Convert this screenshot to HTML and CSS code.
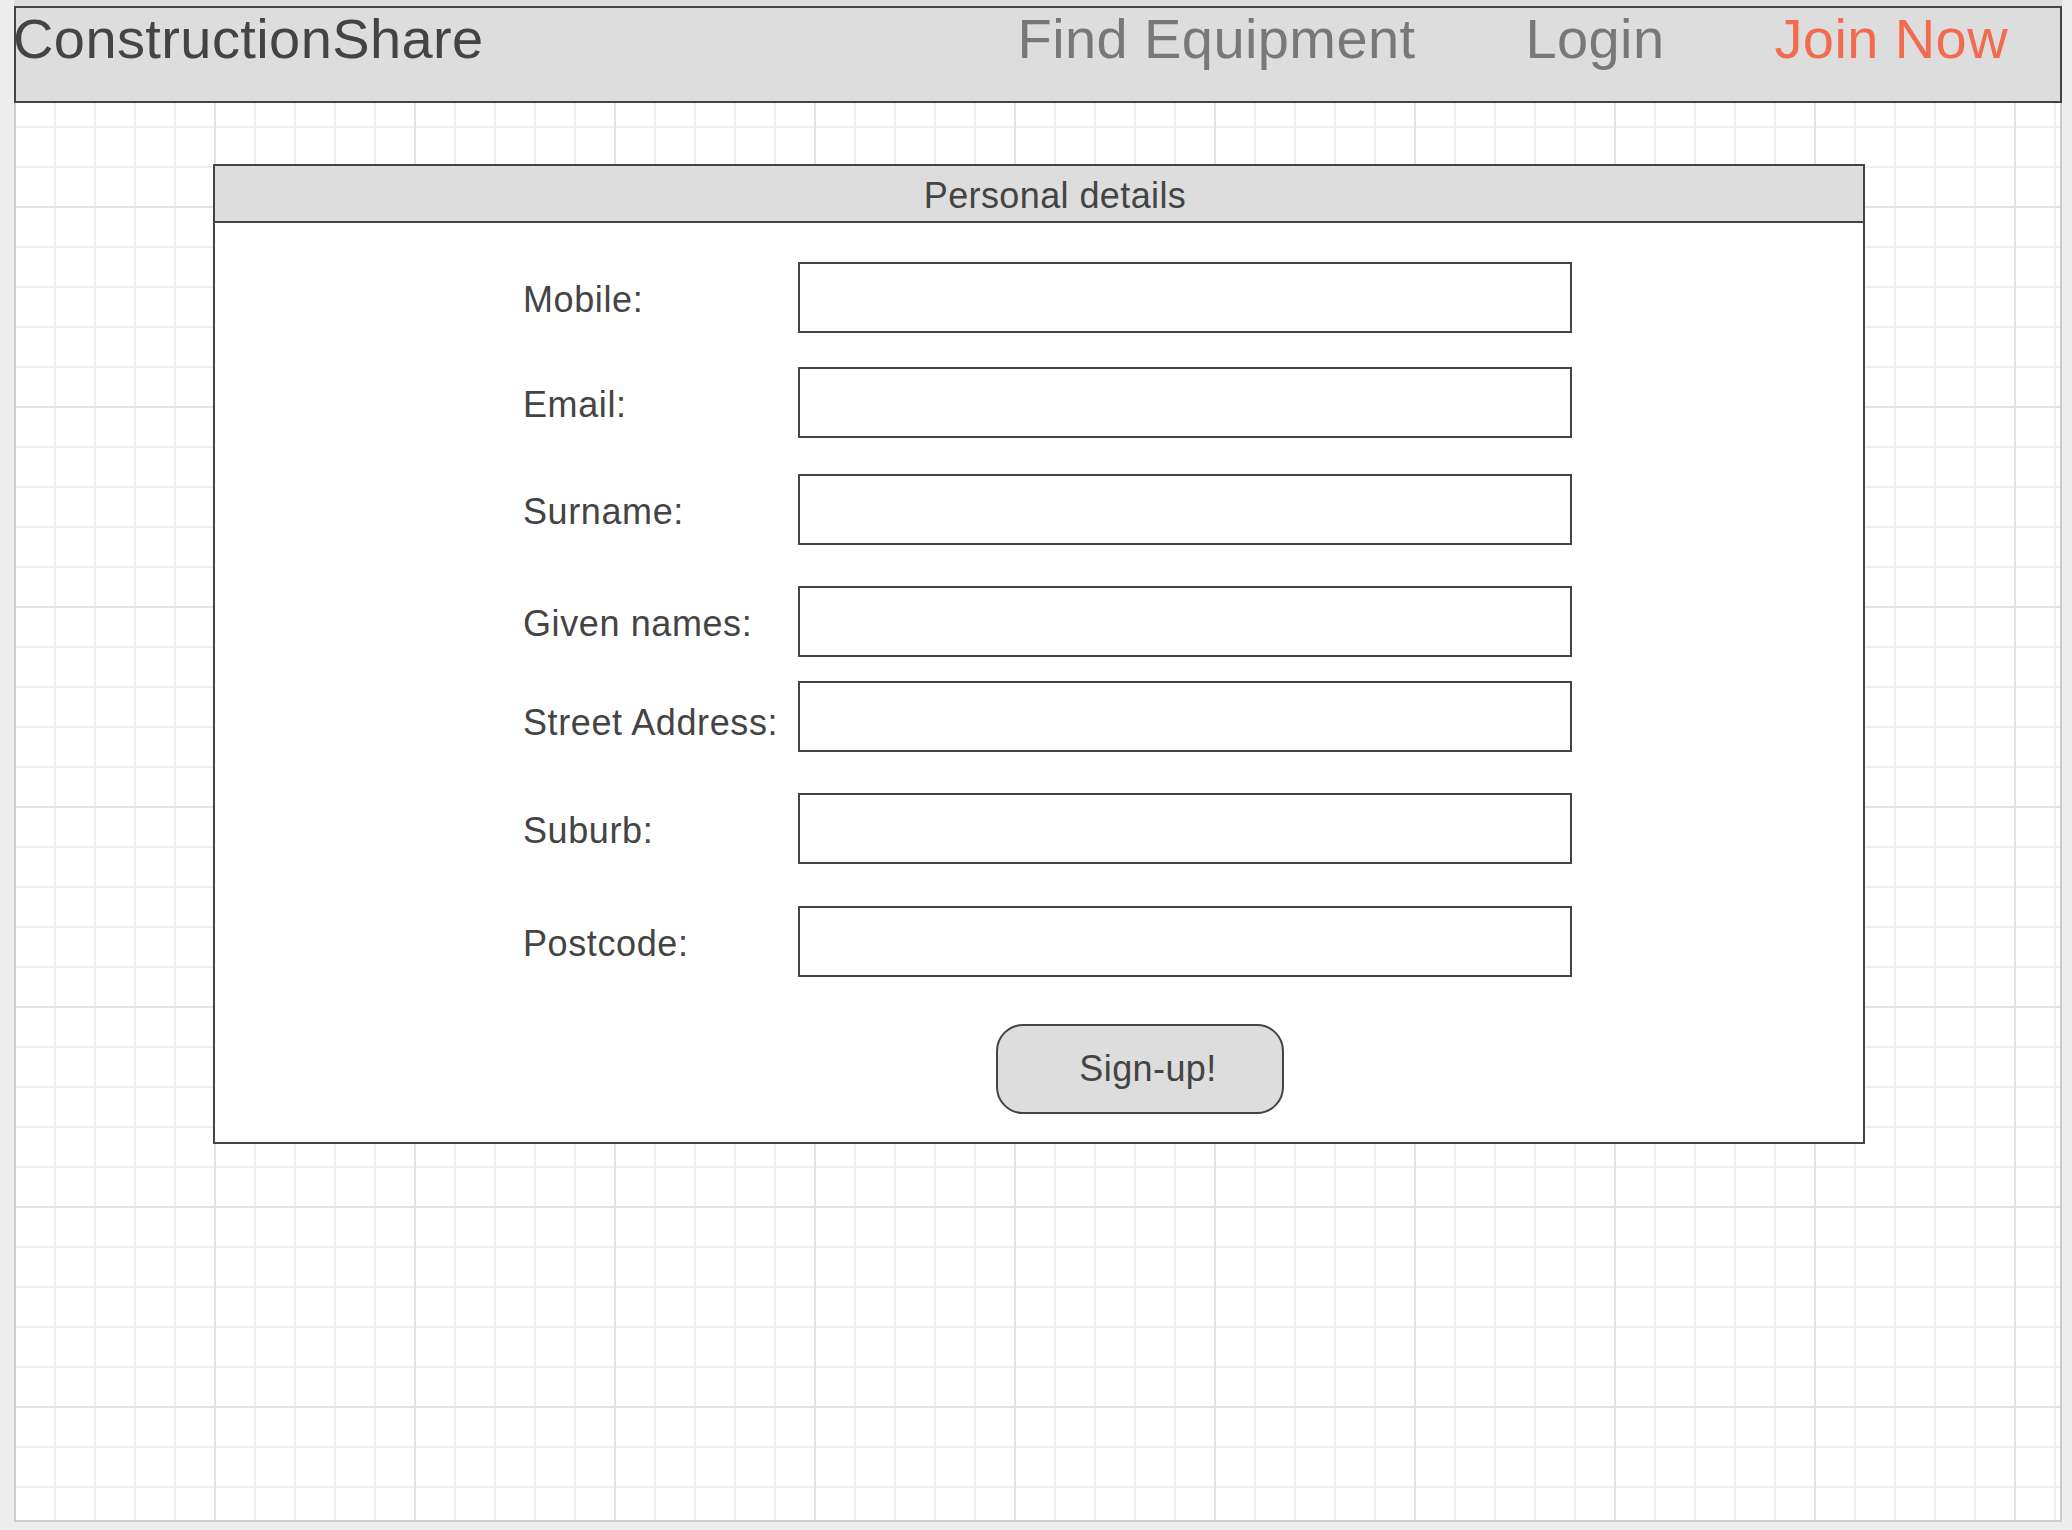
FILE: index.html
```html
<!DOCTYPE html>
<html lang="en">
<head>
<meta charset="utf-8">
<title>ConstructionShare – Join Now</title>
<link rel="stylesheet" href="styles.css">
</head>
<body>
<div class="app">
  <div class="topstrip"></div>
  <header class="header">
    <div class="brand">ConstructionShare</div>
    <nav class="nav">
      <a class="nav-link">Find Equipment</a>
      <a class="nav-link">Login</a>
      <a class="nav-link nav-link--active">Join Now</a>
    </nav>
  </header>
  <main class="canvas">
    <section class="panel">
      <div class="panel-title">Personal details</div>
      <form class="panel-body">
        <div class="row">
          <label class="label">Mobile:</label>
          <input class="field" type="text">
        </div>
        <div class="row row--email">
          <label class="label">Email:</label>
          <input class="field" type="text">
        </div>
        <div class="row row--surname">
          <label class="label">Surname:</label>
          <input class="field" type="text">
        </div>
        <div class="row row--given">
          <label class="label">Given names:</label>
          <input class="field" type="text">
        </div>
        <div class="row row--street">
          <label class="label label--low">Street Address:</label>
          <input class="field" type="text">
        </div>
        <div class="row row--suburb">
          <label class="label">Suburb:</label>
          <input class="field" type="text">
        </div>
        <div class="row row--postcode">
          <label class="label">Postcode:</label>
          <input class="field" type="text">
        </div>
        <button class="signup" type="button">Sign-up!</button>
      </form>
    </section>
  </main>
</div>
</body>
</html>
```
FILE: styles.css
```css
html, body {
  margin: 0;
  padding: 0;
}

body {
  background: #ededed;
  font-family: "Liberation Sans", Arial, Helvetica, sans-serif;
  letter-spacing: 0.4px;
  width: 2072px;
  height: 1530px;
  overflow: hidden;
}

.app {
  margin-left: 14px;
  width: 2048px;
  display: flex;
  flex-direction: column;
}

.topstrip {
  height: 6px;
  background: #dddddd;
}

.header {
  height: 97px;
  box-sizing: border-box;
  border: 2px solid #444444;
  background: #dddddd;
  display: flex;
  align-items: flex-start;
  padding-top: 3px;
  padding-right: 52px;
  font-size: 56px;
  line-height: 56px;
  white-space: nowrap;
}

.brand {
  color: #444444;
  margin-left: -3px;
}

.nav {
  margin-left: auto;
  display: flex;
  gap: 110px;
}

.nav-link {
  color: #787878;
  text-decoration: none;
}

.nav-link--active {
  color: #f26b4f;
}

.canvas {
  height: 1419px;
  box-sizing: border-box;
  border: 2px solid #cccccc;
  border-top: none;
  background-color: #ffffff;
  background-image:
    linear-gradient(to right, #e2e2e2 0, #e2e2e2 2px, transparent 2px),
    linear-gradient(to bottom, #e2e2e2 0, #e2e2e2 2px, transparent 2px),
    linear-gradient(to right, #eeeeee 0, #eeeeee 2px, transparent 2px),
    linear-gradient(to bottom, #eeeeee 0, #eeeeee 2px, transparent 2px);
  background-size: 200px 200px, 200px 200px, 40px 40px, 40px 40px;
  background-position: 198px 0, 0 103px, 38px 0, 0 23px;
  display: flex;
  flex-direction: column;
  align-items: flex-start;
}

.panel {
  margin: 61px 0 0 197px;
  width: 1652px;
  box-sizing: border-box;
  border: 2px solid #444444;
  background: #ffffff;
  color: #444444;
}

.panel-title {
  height: 57px;
  box-sizing: border-box;
  padding-top: 4px;
  padding-left: 32px;
  line-height: 51px;
  border-bottom: 2px solid #444444;
  background: #dddddd;
  text-align: center;
  font-size: 36px;
}

.panel-body {
  margin: 0;
  padding: 39px 0 28px 308px;
  display: flex;
  flex-direction: column;
  align-items: flex-start;
}

.row {
  display: flex;
  align-items: center;
  height: 71px;
}

.row--email { margin-top: 34px; }
.row--surname { margin-top: 36px; }
.row--given { margin-top: 41px; }
.row--street { margin-top: 24px; }
.row--suburb { margin-top: 41px; }
.row--postcode { margin-top: 42px; }

.label {
  width: 275px;
  padding-top: 5px;
  font-size: 36px;
  letter-spacing: 0.6px;
  color: #444444;
  white-space: nowrap;
}

.label--low {
  padding-top: 13px;
}

.field {
  width: 774px;
  height: 71px;
  box-sizing: border-box;
  margin: 0;
  padding: 0 12px;
  border: 2px solid #444444;
  border-radius: 0;
  background: #ffffff;
  outline: none;
  font-family: inherit;
  font-size: 32px;
}

.signup {
  margin: 47px 0 0 473px;
  width: 288px;
  height: 90px;
  box-sizing: border-box;
  padding: 0 0 0 16px;
  border: 2px solid #444444;
  border-radius: 27px;
  background: #dddddd;
  color: #444444;
  font-family: "Liberation Sans", Arial, Helvetica, sans-serif;
  font-size: 36px;
  letter-spacing: 0.4px;
  line-height: 1;
  cursor: pointer;
}
```
